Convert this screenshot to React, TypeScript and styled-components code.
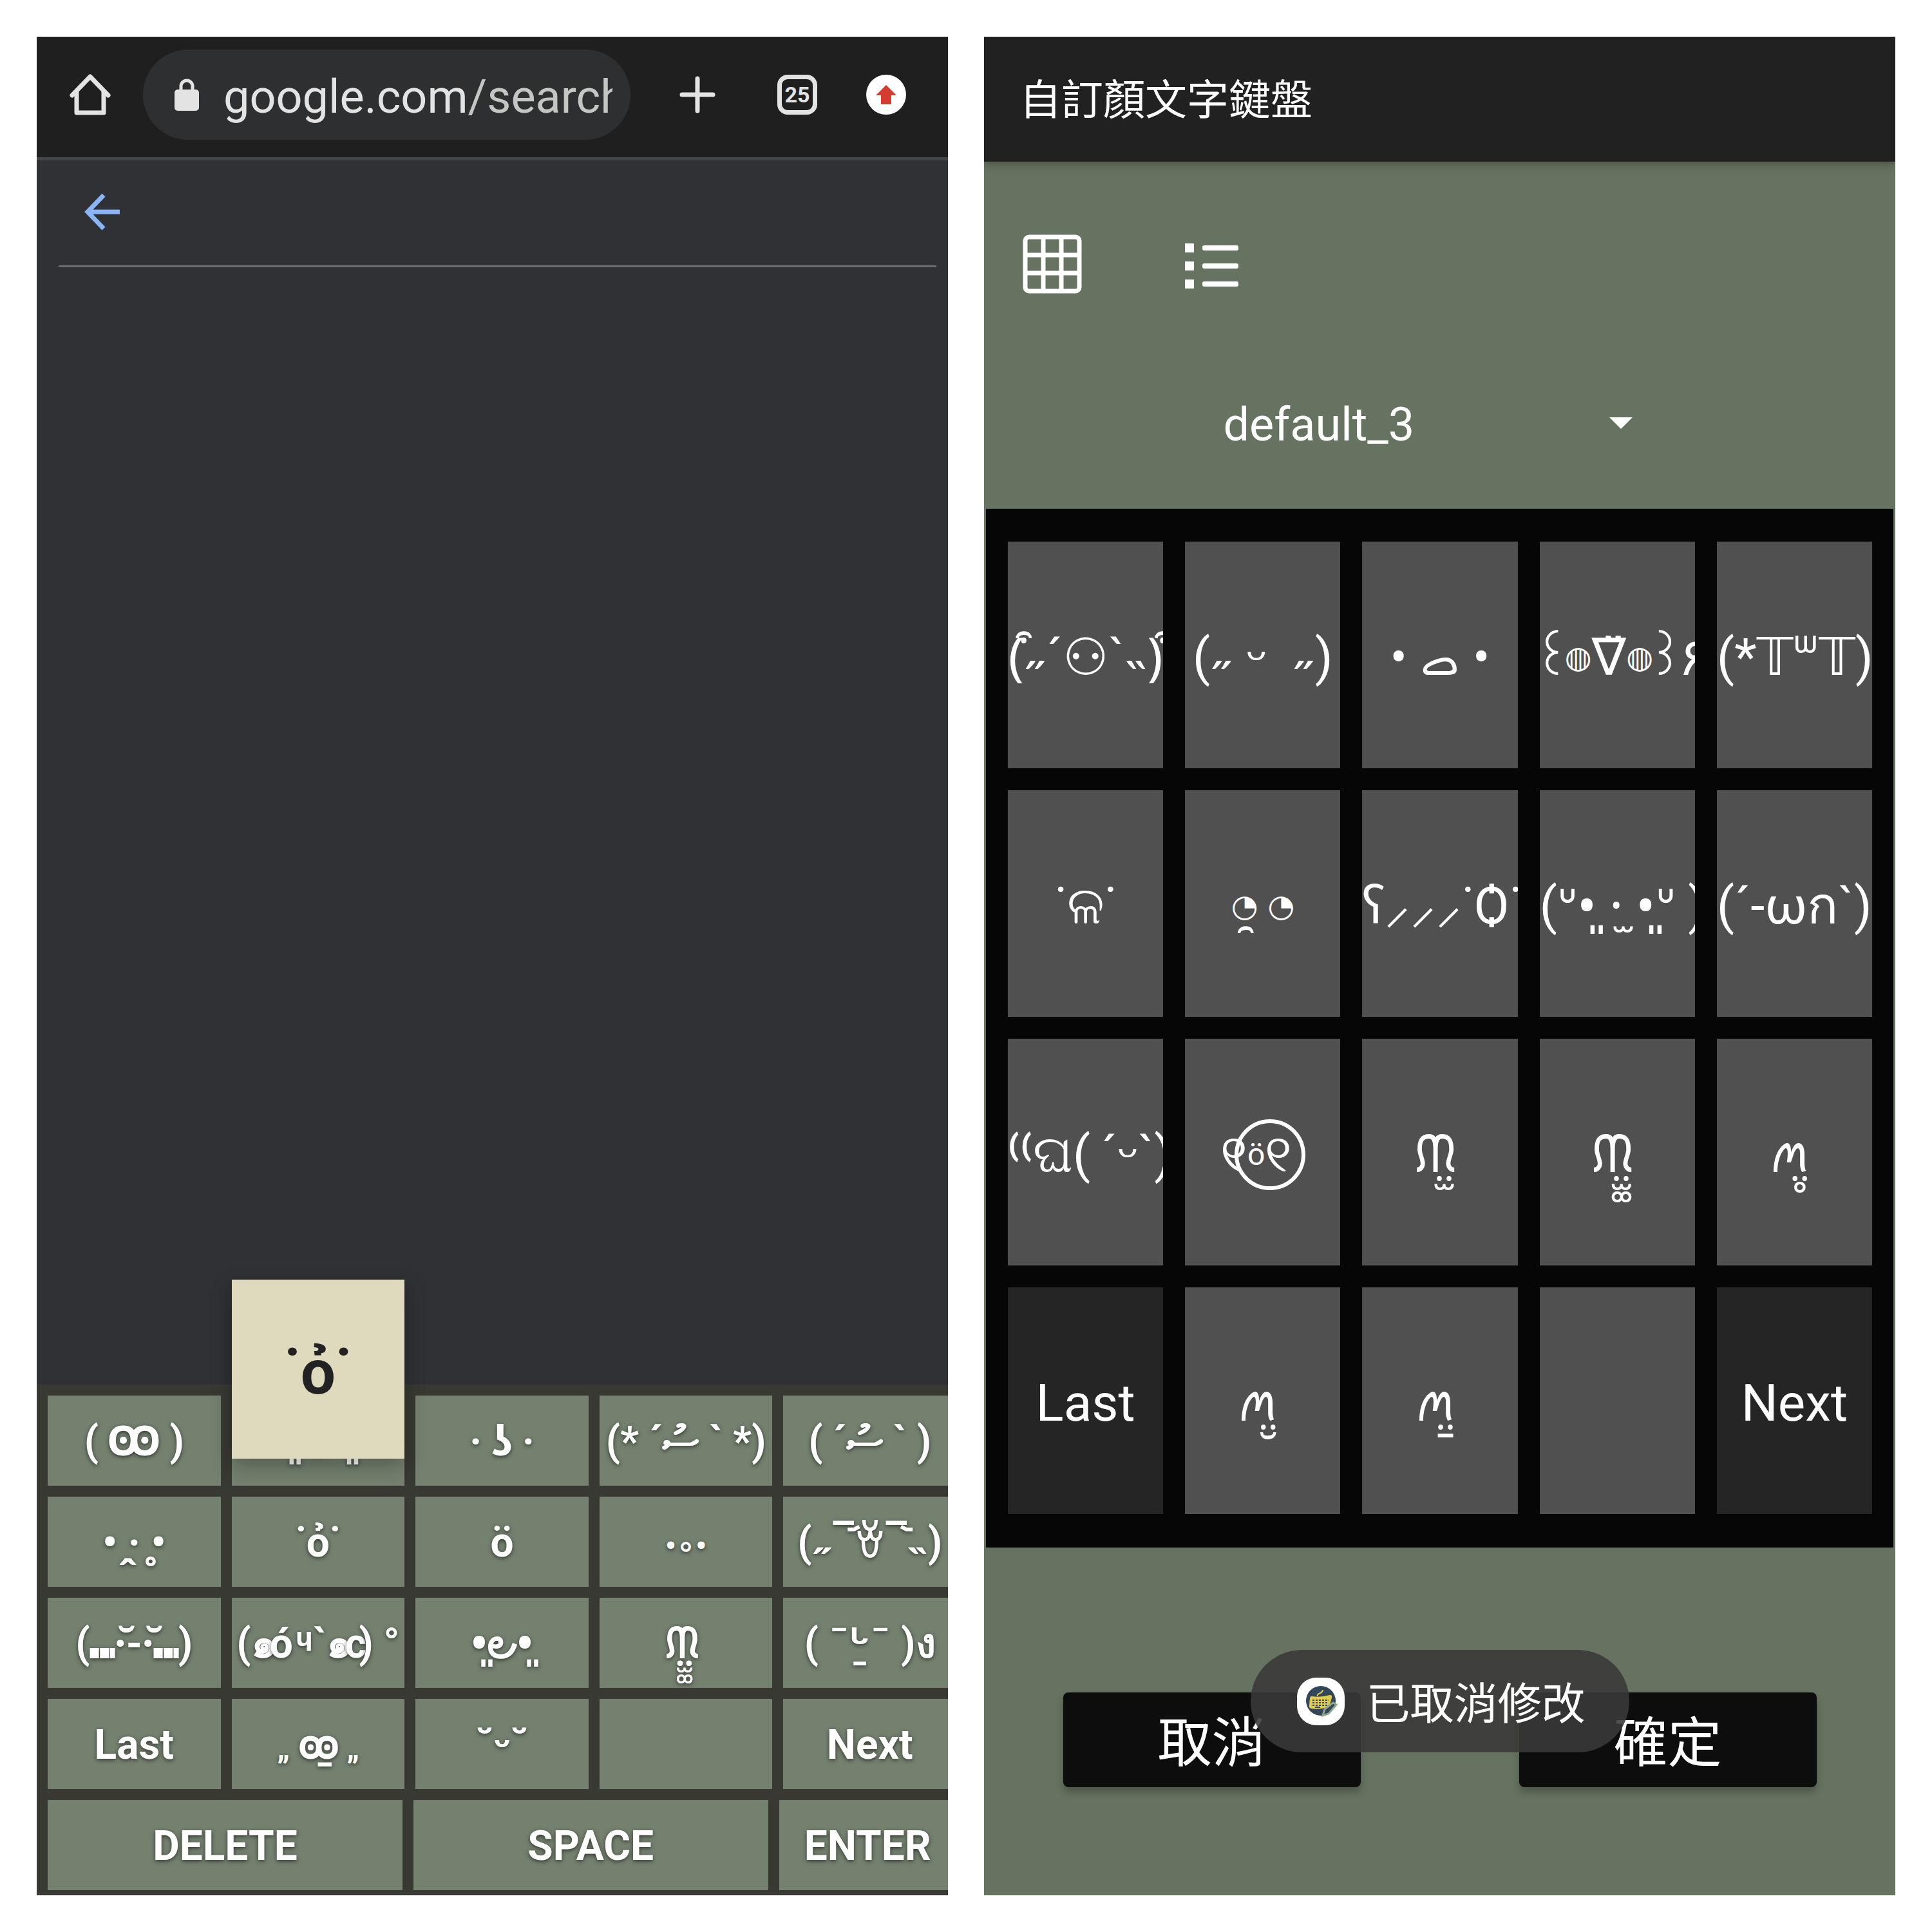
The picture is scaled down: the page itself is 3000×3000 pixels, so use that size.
import React from 'react';
import styled, { createGlobalStyle } from 'styled-components';

const GlobalStyle = createGlobalStyle`
  *, *::before, *::after { box-sizing: border-box; }
  body {
    margin: 0;
    background: #fff;
    font-family: Roboto, "Noto Sans", "Noto Sans CJK TC", "DejaVu Sans", sans-serif;
  }
  button, input, select { font: inherit; color: inherit; }
  button { border: 0; padding: 0; background: none; cursor: pointer; }
`;

const Page = styled.main`
  display: grid;
  grid-template-columns: 1fr 1fr;
  gap: 56px;
  padding: 57px;
`;

const Screen = styled.section<{ $bg: string }>`
  display: flex;
  flex-direction: column;
  min-width: 0;
  min-height: 2886px;
  overflow: hidden;
  background: ${p => p.$bg};
`;

const BrowserBar = styled.header`
  display: flex;
  align-items: center;
  padding: 20px 65px 27px 51px;
  background: #1f1f1f;
  border-bottom: 5px solid #454745;
`;

const IconButton = styled.button`
  display: flex;
  flex: none;
  align-items: center;
  justify-content: center;
  svg { display: block; }
`;

const AddressPill = styled.div`
  display: flex;
  flex: 1;
  align-items: center;
  gap: 38px;
  min-width: 0;
  height: 140px;
  margin: 0 76px 0 50px;
  padding: 0 28px 0 49px;
  border-radius: 70px;
  background: #2e2f31;
`;

const Address = styled.span`
  flex: 1;
  min-width: 0;
  overflow: hidden;
  white-space: nowrap;
  color: #c4c6c4;
  font-size: 72px;
  line-height: 96px;
  padding-top: 8px;
  b { color: #e3e3e3; font-weight: 400; }
`;

const BarActions = styled.div`
  display: flex;
  flex: none;
  align-items: center;
  gap: 76px;
`;

const TabCount = styled.button`
  width: 62px;
  height: 62px;
  margin-left: 20px;
  border: 7px solid #e3e3e3;
  border-radius: 16px;
  color: #e3e3e3;
  font-size: 34px;
  font-weight: 700;
  line-height: 48px;
  text-align: center;
`;

const SearchHead = styled.div`
  display: flex;
  flex: none;
  align-items: center;
  height: 166px;
  margin: 0 18px 0 34px;
  padding: 0 36px 4px;
  border-bottom: 3px solid #6b6d70;
`;

const Keyboard = styled.div`
  display: flex;
  flex-direction: column;
  gap: 17px;
  margin-top: auto;
  padding: 17px 0 8px 17px;
  background: #393933;
`;

const KeyRow = styled.div<{ $cols: string }>`
  display: grid;
  grid-template-columns: ${p => p.$cols};
  gap: 17px;
  margin-right: -13px;
`;

const Key = styled.button`
  min-width: 0;
  height: 140px;
  overflow: hidden;
  background: #74816f;
  color: #fff;
  font-size: 64px;
  font-weight: 700;
  line-height: 143px;
  text-align: center;
  text-shadow: 0 2px 6px rgba(0, 0, 0, 0.6);
  white-space: pre;
`;

const KeySlot = styled.div`
  position: relative;
  display: grid;
  min-width: 0;
`;

const Preview = styled.output`
  position: absolute;
  z-index: 1;
  right: 0;
  bottom: 42px;
  left: 0;
  height: 278px;
  background: #dfdabe;
  color: #222;
  box-shadow: 0 10px 30px rgba(0, 0, 0, 0.3);
  font-size: 96px;
  font-weight: 700;
  line-height: 288px;
  text-align: center;
`;

const Marks = styled.span`
  margin: 0 34px 0 -40px;
`;

const Low = styled.span`
  position: relative;
  top: 14px;
`;

const Small = styled.span`
  font-size: 48px;
`;

const Tight = styled.span`
  margin: 0 -12px;
`;

const Ring = styled.span`
  display: inline-flex;
  align-items: center;
  justify-content: center;
  width: 110px;
  height: 110px;
  margin-left: -20px;
  border: 6px solid currentColor;
  border-radius: 50%;
`;

const TitleBar = styled.header`
  padding: 51px 55px 47px;
  background: #212121;
  color: #fff;
  box-shadow: 0 4px 14px rgba(0, 0, 0, 0.3);
  h1 { margin: 0; font-size: 65px; font-weight: 400; line-height: 96px; }
`;

const Toolbar = styled.div`
  display: flex;
  align-items: center;
  gap: 158px;
  padding: 113px 60px 0;
`;

const Picker = styled.label`
  position: relative;
  display: flex;
  align-items: center;
  width: 720px;
  margin: 145px auto 0;
  padding-bottom: 71px;
  svg { position: absolute; right: 61px; top: 47px; pointer-events: none; }
`;

const Select = styled.select`
  width: 100%;
  height: 118px;
  padding: 0 0 0 24px;
  border: 0;
  appearance: none;
  background: transparent;
  color: #fff;
  font-size: 72px;
  line-height: 118px;
`;

const Pad = styled.div`
  display: grid;
  grid-template-columns: repeat(5, 1fr);
  gap: 34px;
  margin: 0 3px;
  padding: 51px 33px 52px 34px;
  background: #060606;
`;

const PadKey = styled.button<{ $dark?: boolean }>`
  display: flex;
  align-items: center;
  justify-content: safe center;
  min-width: 0;
  height: 352px;
  padding-top: 8px;
  overflow: hidden;
  background: ${p => (p.$dark ? '#252525' : '#505050')};
  color: #fff;
  font-size: 80px;
  line-height: 108px;
  white-space: pre;
`;

const Face = styled.span`
  display: flex;
  align-items: center;
  flex: none;
`;

const Footer = styled.footer`
  position: relative;
  display: flex;
  flex: 1;
  align-items: flex-start;
  justify-content: center;
  gap: 246px;
  padding-top: 225px;
`;

const ActionButton = styled.button`
  width: 462px;
  height: 147px;
  padding-top: 12px;
  border-radius: 8px;
  background: #0d0d0d;
  color: #fff;
  box-shadow: 0 8px 12px rgba(0, 0, 0, 0.25);
  font-size: 84px;
  line-height: 130px;
`;

const Toast = styled.div`
  position: absolute;
  top: 159px;
  left: 50%;
  transform: translateX(-50%);
  display: flex;
  align-items: center;
  gap: 34px;
  height: 159px;
  padding: 0 68px 0 72px;
  border-radius: 80px;
  background: rgba(58, 57, 57, 0.89);
  color: #fff;
  font-size: 68px;
  line-height: 100px;
  white-space: nowrap;
  svg { flex: none; }
  span { padding-top: 10px; }
`;

const HomeIcon = () => (
  <svg width="64" height="66" viewBox="0 0 64 66" fill="none" stroke="#e3e3e3" strokeWidth="7" strokeLinecap="round" strokeLinejoin="round">
    <path d="M4 34 L32 5 L60 34" />
    <path d="M11 28 V61 H53 V28" />
  </svg>
);

const LockIcon = () => (
  <svg width="38" height="52" viewBox="0 0 38 52">
    <rect x="0" y="18" width="38" height="33" rx="5" fill="#e3e3e3" />
    <path d="M10 20 V13 a9 9 0 0 1 18 0 V20" fill="none" stroke="#e3e3e3" strokeWidth="5" />
  </svg>
);

const PlusIcon = () => (
  <svg width="56" height="58" viewBox="0 0 56 58" stroke="#e3e3e3" strokeWidth="7" strokeLinecap="round">
    <path d="M28 4 V54 M4 29 H52" />
  </svg>
);

const UpdateIcon = () => (
  <svg width="62" height="62" viewBox="0 0 62 62">
    <circle cx="31" cy="31" r="31" fill="#fff" />
    <path d="M31 16 L47 32 H39 V46 H23 V32 H15 Z" fill="#d33c2e" />
  </svg>
);

const BackIcon = () => (
  <svg width="62" height="58" viewBox="0 0 62 58" fill="none" stroke="#8ab4f8" strokeWidth="7">
    <path d="M34 3 L9 29 L34 55 M9 29 H59" />
  </svg>
);

const GridIcon = () => (
  <svg width="92" height="92" viewBox="0 0 92 92" fill="none" stroke="#fff" strokeWidth="7">
    <rect x="4" y="4" width="84" height="84" rx="6" />
    <path d="M32 4 V88 M60 4 V88 M4 32 H88 M4 60 H88" />
  </svg>
);

const ListIcon = () => (
  <svg width="92" height="92" viewBox="0 0 92 92" fill="#fff">
    <path d="M2 14h14v14H2z M2 42h14v14H2z M2 70h14v14H2z" />
    <rect x="29" y="17" width="56" height="8" rx="3" />
    <rect x="29" y="45" width="56" height="8" rx="3" />
    <rect x="29" y="73" width="56" height="8" rx="3" />
  </svg>
);

const CaretIcon = () => (
  <svg width="36" height="18" viewBox="0 0 36 18" fill="#fff">
    <path d="M0 0 H36 L18 18 Z" />
  </svg>
);

const AppLogo = () => (
  <svg width="74" height="74" viewBox="0 0 74 74">
    <rect width="74" height="74" rx="30" fill="#fff" />
    <circle cx="37" cy="36" r="23" fill="#32475b" />
    <path d="M32 29 C30 23 40 26 40 19" fill="none" stroke="#e3cb4c" strokeWidth="2" />
    <path d="M23 29 Q37 31 51 27 Q55 27 54 31 L51 42 Q50 45 46 46 Q36 50 22 48 Q18 47 19 43 L20 32 Q20 29 23 29Z" fill="#e3cb4c" />
    <path d="M24 35 H50 M24 39 H49 M24 43 H47" stroke="#32475b" strokeWidth="2" strokeDasharray="3 2" fill="none" />
    <path d="M28 46 H36" stroke="#32475b" strokeWidth="2" />
    <path d="M40 59 L43 49 L56 39 L61 42 L49 56Z" fill="#32475b" stroke="#8fa68f" strokeWidth="3" />
  </svg>
);

const keyboardRows: React.ReactNode[][] = [
  ['(\u2009Ꙭ\u2009)', '·͈ ᴗ ·͈', '· ʖ ·', '(* ´ސު ` *)', '( ´ސު ` )'],
  ['• ̭· ̥•', '˙ỏ˙', 'ö', <Small>•∘•</Small>, <>(<Low>˶</Low>¯᷄ꈊ¯᷅<Low>˵</Low>)</>],
  ['(⑉·̆-·̆⑉)', <>(๑<Tight>ó</Tight> ᶣ`๑<Tight>c</Tight>) °</>, '•͈౿•͈', <>ᙏ<Marks>&nbsp;̤̫͚</Marks></>, '( ¯ᒡ̱¯ )ง'],
  ['Last', <><Small>„</Small>{'\u2009\uA66D'}<Marks>&nbsp;̱</Marks><Small>„</Small></>, '˘ᵕ˘', '', 'Next'],
];

const padKeys: React.ReactNode[] = [
  <>(͒<Low>˶</Low>´⚇`<Low>˵</Low>)͒</>,
  <>(<Low>˶</Low> ᵕ  <Low>˶</Low>)</>,
  '• ࡇ •',
  <><Tight>꒰</Tight><Small>◍</Small>∇̈<Small>◍</Small><Tight>꒱</Tight>۶</>,
  '(*𝕋ᐜ𝕋)',
  '˙ଳ˙', <><Small>◔</Small><Marks>&nbsp;̯</Marks><Small>◔</Small></>, 'ʕ⸝⸝⸝˙Ѻ˙', '(ᐡ•͈ ·̫ •͈ᐡ )', '(´-ωก`)',
  '⁽⁽ଘ(\u2009´ᵕ`)', <>୧<Ring><Small>ö</Small>୧</Ring></>, <>ᙏ<Marks>&nbsp;̤̫</Marks></>, <>ᙏ<Marks>&nbsp;̤̫͚</Marks></>, <>ꪔ<Marks>&nbsp;̤̥</Marks></>,
  'Last', <>ꪔ<Marks>&nbsp;̤̮</Marks></>, <>ꪔ<Marks>&nbsp;̤̱</Marks></>, '', 'Next',
];

export default function App() {
  return (
    <Page>
      <GlobalStyle />
      <Screen $bg="#303135">
        <BrowserBar>
          <IconButton aria-label="Home"><HomeIcon /></IconButton>
          <AddressPill>
            <LockIcon />
            <Address><b>google.com</b>/search</Address>
          </AddressPill>
          <BarActions>
            <IconButton aria-label="New tab"><PlusIcon /></IconButton>
            <TabCount aria-label="Tabs">25</TabCount>
            <IconButton aria-label="Update"><UpdateIcon /></IconButton>
          </BarActions>
        </BrowserBar>
        <SearchHead>
          <IconButton aria-label="Back"><BackIcon /></IconButton>
        </SearchHead>
        <Keyboard>
          {keyboardRows.map((row, r) => (
            <KeyRow key={r} $cols="repeat(5, minmax(0, 1fr))">
              {row.map((face, c) => (
                <KeySlot key={c}>
                  <Key>{face}</Key>
                  {r === 0 && c === 1 && <Preview>˙ỏ˙</Preview>}
                </KeySlot>
              ))}
            </KeyRow>
          ))}
          <KeyRow $cols="2fr 2fr 1fr">
            <Key>DELETE</Key>
            <Key>SPACE</Key>
            <Key>ENTER</Key>
          </KeyRow>
        </Keyboard>
      </Screen>

      <Screen $bg="#677361">
        <TitleBar><h1>自訂顏文字鍵盤</h1></TitleBar>
        <Toolbar>
          <IconButton aria-label="Grid view"><GridIcon /></IconButton>
          <IconButton aria-label="List view"><ListIcon /></IconButton>
        </Toolbar>
        <Picker>
          <Select aria-label="Keyboard" defaultValue="default_3">
            <option>default_3</option>
          </Select>
          <CaretIcon />
        </Picker>
        <Pad>
          {padKeys.map((face, i) => (
            <PadKey key={i} $dark={face === 'Last' || face === 'Next'}><Face>{face}</Face></PadKey>
          ))}
        </Pad>
        <Footer>
          <ActionButton>取消</ActionButton>
          <ActionButton>確定</ActionButton>
          <Toast role="status"><AppLogo /><span>已取消修改</span></Toast>
        </Footer>
      </Screen>
    </Page>
  );
}
